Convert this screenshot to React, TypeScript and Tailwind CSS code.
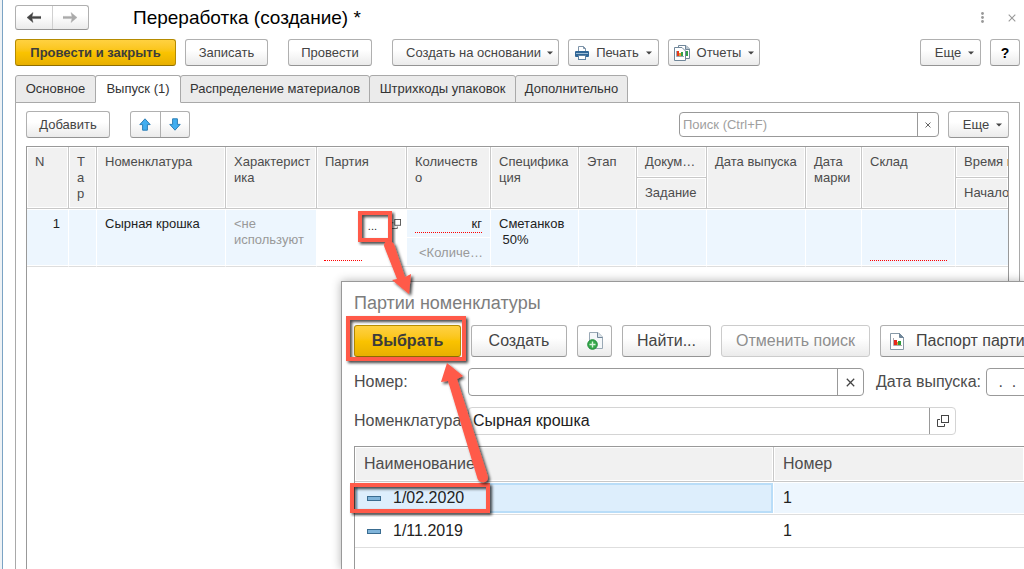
import React, { useState } from "react";
import clsx from "clsx";

type ButtonProps = React.ButtonHTMLAttributes<HTMLButtonElement>;

function Button({ className, children, ...rest }: ButtonProps) {
  return (
    <button
      type="button"
      className={clsx(
        "flex shrink-0 items-center justify-center rounded-[3px] border border-[#b0b0b0] border-b-[#949494] bg-linear-to-b from-white from-40% to-[#ebebeb] whitespace-nowrap text-[#444] disabled:border-[#cccccc] disabled:text-[#8e8e8e]",
        className,
      )}
      {...rest}
    >
      {children}
    </button>
  );
}

function PrimaryButton({ className, children, ...rest }: ButtonProps) {
  return (
    <button
      type="button"
      className={clsx(
        "flex shrink-0 items-center justify-center rounded-[3px] border border-[#b58b00] border-b-[#8f6e00] bg-linear-to-b from-[#ffd140] via-[#fac300] to-[#e8b000] font-bold whitespace-nowrap text-[#3c3c3c]",
        className,
      )}
      {...rest}
    >
      {children}
    </button>
  );
}

function Caret() {
  return (
    <svg width="6" height="4" viewBox="0 0 6 4" className="mt-px shrink-0" aria-hidden="true">
      <path d="M0 0.5h6L3 3.5z" fill="#444" />
    </svg>
  );
}

function NavArrow({ color, flip }: { color: string; flip?: boolean }) {
  return (
    <svg width="14" height="11" viewBox="0 0 14 11" className={flip ? "rotate-180" : ""} aria-hidden="true">
      <path d="M0 5.5L6 0.5L5 4.4H14V6.6H5L6 10.5z" fill={color} stroke={color} strokeWidth="0.4" />
    </svg>
  );
}

function MoveArrow({ flip }: { flip?: boolean }) {
  return (
    <svg width="12" height="13" viewBox="0 0 12 13" className={flip ? "rotate-180" : ""} aria-hidden="true">
      <path d="M6 0.8L11.2 6.6H8.4V12.2H3.6V6.6H0.8z" fill="#41aef0" stroke="#2d7fb5" />
    </svg>
  );
}

function PrinterIcon() {
  return (
    <svg width="14" height="14" viewBox="0 0 14 14" aria-hidden="true">
      <path d="M3.5 5V0.5H8.5L10.5 2.5V5" fill="#fff" stroke="#7d93a8" />
      <path d="M8.5 0.5V2.5H10.5" fill="none" stroke="#7d93a8" />
      <rect x="0" y="5" width="14" height="6" rx="1" fill="#2f6697" />
      <path d="M1 7.5H13" stroke="#9dbdd6" />
      <rect x="3.5" y="9.5" width="7" height="4" fill="#fff" stroke="#5e82a2" />
    </svg>
  );
}

function ReportsIcon() {
  return (
    <svg width="16" height="16" viewBox="0 0 16 16" aria-hidden="true">
      <path d="M4.5 0.5H12L15.5 4V13.5H4.5z" fill="#fff" stroke="#71879a" />
      <path d="M11.5 0.5V4.5H15.5" fill="#b9c6d0" stroke="#71879a" />
      <rect x="12" y="6" width="2" height="5" fill="#31a24c" />
      <path d="M0.5 2.5H8L11.5 6V15.5H0.5z" fill="#fff" stroke="#71879a" />
      <path d="M2.5 6V11.5H10" fill="none" stroke="#9aa9b5" />
      <rect x="3" y="6" width="2" height="5" fill="#e63a1e" />
      <rect x="5" y="8" width="2" height="3" fill="#e89a30" />
      <rect x="7" y="7" width="2" height="4" fill="#31a24c" />
    </svg>
  );
}

function ReportIcon() {
  return (
    <svg width="14" height="17" viewBox="0 0 14 17" aria-hidden="true">
      <path d="M0.5 0.5H9.5L13.5 4.5V16.5H0.5z" fill="#fff" stroke="#8798a6" />
      <path d="M9.5 0.5V4.5H13.5z" fill="#71879a" stroke="#71879a" />
      <path d="M3.5 5V12.5H12" fill="none" stroke="#b0a8b0" />
      <rect x="4" y="7" width="3" height="5" fill="#e6281e" />
      <rect x="8" y="8" width="3" height="4" fill="#2f9a3a" />
      <rect x="7" y="9" width="1" height="3" fill="#e89a30" />
    </svg>
  );
}

function NewFileIcon() {
  return (
    <svg width="16" height="18" viewBox="0 0 16 18" aria-hidden="true">
      <path d="M2.5 0.5H11L15.5 5V16.5H2.5z" fill="#f4f7f9" stroke="#9aa9b5" />
      <path d="M10.5 0.5V5.5H15.5" fill="#dce4ea" stroke="#71879a" />
      <circle cx="5.5" cy="12.5" r="4.8" fill="#35a94a" stroke="#1f8a38" />
      <path d="M5.5 9.5V15.5M2.5 12.5H8.5" stroke="#d8f2dc" strokeWidth="1.4" />
    </svg>
  );
}

function OpenIcon({ size }: { size: number }) {
  return (
    <svg width={size} height={size} viewBox="0 0 12 12" fill="none" stroke="#444" aria-hidden="true">
      <rect x="4.5" y="0.5" width="7" height="7" />
      <path d="M3 4.5H0.5V11.5H7.5V9" />
    </svg>
  );
}

function Cross({ size, color }: { size: number; color: string }) {
  return (
    <svg width={size} height={size} viewBox="0 0 8 8" aria-hidden="true">
      <path d="M0.7 0.7L7.3 7.3M7.3 0.7L0.7 7.3" stroke={color} strokeWidth="1.1" />
    </svg>
  );
}

const tabs = [
  { label: "Основное", width: "w-[81px]" },
  { label: "Выпуск (1)", width: "w-[86px]" },
  { label: "Распределение материалов", width: "w-[190px]" },
  { label: "Штрихкоды упаковок", width: "w-[147px]" },
  { label: "Дополнительно", width: "w-[113px]" },
];

const headCell =
  "overflow-hidden border-r border-b border-[#c8c8c8] bg-[#f1f1f1] px-2 pt-[7px] text-left align-top font-normal text-[#4c4c4c] shadow-[inset_0_0_0_1px_#fff] last:border-r-0";
const bodyCell =
  "overflow-hidden border-r border-b border-r-white border-b-[#dedede] bg-[#edf6fe] px-2 pt-[7px] align-top shadow-[inset_0_1px_0_#fff,inset_0_-1px_0_#fff] last:border-r-0";

function OutputTable() {
  return (
    <table className="w-full table-fixed border-separate border-spacing-0 leading-4">
      <colgroup>
        <col className="w-[42px]" />
        <col className="w-[28px]" />
        <col className="w-[129px]" />
        <col className="w-[91px]" />
        <col className="w-[90px]" />
        <col className="w-[84px]" />
        <col className="w-[88px]" />
        <col className="w-[58px]" />
        <col className="w-[70px]" />
        <col className="w-[99px]" />
        <col className="w-[56px]" />
        <col className="w-[94px]" />
        <col />
      </colgroup>
      <thead>
        <tr className="h-[31px]">
          <th rowSpan={2} className={headCell}>N</th>
          <th rowSpan={2} className={clsx(headCell, "break-all")}>Тар</th>
          <th rowSpan={2} className={headCell}>Номенклатура</th>
          <th rowSpan={2} className={clsx(headCell, "whitespace-nowrap")}>Характерист<br />ика</th>
          <th rowSpan={2} className={headCell}>Партия</th>
          <th rowSpan={2} className={headCell}>Количеств<br />о</th>
          <th rowSpan={2} className={headCell}>Специфика<br />ция</th>
          <th rowSpan={2} className={headCell}>Этап</th>
          <th className={headCell}>Докум…</th>
          <th rowSpan={2} className={clsx(headCell, "whitespace-nowrap")}>Дата выпуска</th>
          <th rowSpan={2} className={headCell}>Дата марки</th>
          <th rowSpan={2} className={headCell}>Склад</th>
          <th className={clsx(headCell, "whitespace-nowrap")}>Время п</th>
        </tr>
        <tr className="h-[31px]">
          <th className={headCell}>Задание</th>
          <th className={headCell}>Начало</th>
        </tr>
      </thead>
      <tbody className="text-[#222]">
        <tr className="h-[58px]">
          <td className={clsx(bodyCell, "text-right")}>1</td>
          <td className={bodyCell} />
          <td className={bodyCell}>Сырная крошка</td>
          <td className={clsx(bodyCell, "text-[#999]")}>&lt;не используют</td>
          <td className="border-b border-[#dedede] p-0 align-top">
            <div className="flex h-[57px] flex-col justify-between pb-[5px] pl-[7px]">
              <div className="flex items-start justify-end gap-[10px] pt-[9px] pr-[6px]">
                <button type="button" aria-label="Выбрать партию" className="px-1 text-[11px] leading-4">...</button>
                <button type="button" aria-label="Открыть партию" className="pt-px">
                  <OpenIcon size={10} />
                </button>
              </div>
              <div className="w-[38px] border-b border-dotted border-[#ff0000]" />
            </div>
          </td>
          <td className="border-r border-b border-r-white border-b-[#dedede] bg-[#edf6fe] p-0 align-top shadow-[inset_0_1px_0_#fff,inset_0_-1px_0_#fff]">
            <div className="border-b border-white px-2 pt-[7px] pb-1">
              <div className="border-b border-dotted border-[#ff0000] text-right leading-4">кг</div>
            </div>
            <div className="px-3 pt-[7px] text-[#999]">&lt;Количе…</div>
          </td>
          <td className={bodyCell}>Сметанков<br />&nbsp;50%</td>
          <td className={bodyCell} />
          <td className={bodyCell} />
          <td className={bodyCell} />
          <td className={bodyCell} />
          <td className={bodyCell}>
            <div className="h-[45px] border-b border-dotted border-[#ff0000]" />
          </td>
          <td className={bodyCell} />
        </tr>
      </tbody>
    </table>
  );
}

const batches = [
  { name: "1/02.2020", number: "1" },
  { name: "1/11.2019", number: "1" },
];

function BatchTable() {
  const head = "h-[35px] border-b border-[#c8c8c8] bg-[#f1f1f1] text-left font-normal text-[#4c4c4c] shadow-[inset_0_0_0_1px_#fff]";
  return (
    <table className="w-full table-fixed border-separate border-spacing-0">
      <colgroup>
        <col className="w-[419px]" />
        <col />
      </colgroup>
      <thead>
        <tr>
          <th className={clsx(head, "border-r px-[9px]")}>Наименование</th>
          <th className={clsx(head, "px-[9px]")}>Номер</th>
        </tr>
      </thead>
      <tbody className="text-[#222]">
        {batches.map((batch, i) => (
          <tr key={batch.name} className="h-[33px]">
            <td className="border-b border-[#dedede] p-px">
              <div
                className={clsx(
                  "flex h-[30px] items-center gap-3 border-2 px-[9px]",
                  i === 0 ? "border-[#b9ddf8] bg-[#ddeefc]" : "border-white bg-white",
                )}
              >
                <span className="h-[5px] w-[14px] border border-[#3a6c90] bg-[#7fb4da]" />
                {batch.name}
              </div>
            </td>
            <td
              className={clsx(
                "border-b border-[#dedede] px-[9px] py-0",
                i === 0 && "bg-[#edf6fe] shadow-[inset_0_1px_0_#fff,inset_0_-1px_0_#fff]",
              )}
            >
              {batch.number}
            </td>
          </tr>
        ))}
      </tbody>
    </table>
  );
}

function BatchDialog() {
  const [number, setNumber] = useState("");
  const [item, setItem] = useState("Сырная крошка");
  return (
    <section
      role="dialog"
      aria-labelledby="batch-title"
      className="absolute top-[281px] right-0 bottom-0 left-[341px] flex flex-col overflow-hidden border-t border-l border-[#999] bg-white pl-3 text-base text-[#4c4c4c] shadow-[0_0_9px_rgba(0,0,0,0.3)]"
    >
      <h2 id="batch-title" className="mt-[9px] text-lg leading-6 text-[#7d7d7d]">Партии номенклатуры</h2>
      <div className="mt-[10px] flex gap-[10px] pb-[11px]">
        <PrimaryButton className="h-8 w-[107px]">Выбрать</PrimaryButton>
        <Button className="h-8 w-24">Создать</Button>
        <Button className="h-8 w-[35px]" aria-label="Создать новый элемент">
          <NewFileIcon />
        </Button>
        <Button className="h-8 w-[89px]">Найти...</Button>
        <Button className="h-8 w-[149px]" disabled>Отменить поиск</Button>
        <Button className="h-8 gap-3 px-[9px]">
          <ReportIcon />
          Паспорт партии
        </Button>
      </div>
      <div className="flex items-center">
        <label htmlFor="number" className="w-[114px] shrink-0">Номер:</label>
        <div className="flex h-7 w-[396px] shrink-0 rounded-[4px] border border-[#999]">
          <input
            id="number"
            value={number}
            onChange={(e) => setNumber(e.target.value)}
            className="min-w-0 flex-1 px-1 outline-none"
          />
          <button
            type="button"
            aria-label="Очистить номер"
            onClick={() => setNumber("")}
            className="flex w-[26px] items-center justify-center border-l border-[#999]"
          >
            <Cross size={9} color="#444" />
          </button>
        </div>
        <label htmlFor="date" className="mr-[5px] ml-3 shrink-0">Дата выпуска:</label>
        <input
          id="date"
          defaultValue=" .  ."
          className="h-7 w-[120px] shrink-0 rounded-[4px] border border-[#999] px-[7px] whitespace-pre outline-none"
        />
      </div>
      <div className="mt-[11px] flex items-center">
        <label htmlFor="item" className="w-[114px] shrink-0">Номенклатура:</label>
        <div className="flex h-7 w-[488px] shrink-0 rounded-[4px] border border-[#d4d4d4]">
          <input
            id="item"
            value={item}
            onChange={(e) => setItem(e.target.value)}
            className="min-w-0 flex-1 px-1 text-[#222] outline-none"
          />
          <button
            type="button"
            aria-label="Открыть номенклатуру"
            className="flex w-[26px] items-center justify-center border-l border-[#999]"
          >
            <OpenIcon size={12} />
          </button>
        </div>
      </div>
      <div className="mt-[11px] flex-1 border-t border-l border-[#999]">
        <BatchTable />
      </div>
    </section>
  );
}

function Annotations() {
  return (
    <svg
      width="1024"
      height="569"
      viewBox="0 0 1024 569"
      className="pointer-events-none absolute top-0 left-0 max-w-none"
      aria-hidden="true"
    >
      <defs>
        <filter id="drop" x="-20%" y="-20%" width="140%" height="140%">
          <feDropShadow dx="2" dy="2" stdDeviation="1.5" floodColor="#000" floodOpacity="0.75" />
        </filter>
      </defs>
      <g fill="none" stroke="#ff5a4a" strokeWidth="4">
        <rect x="360" y="213" width="30" height="27" filter="url(#drop)" />
        <rect x="348" y="318" width="116" height="41" filter="url(#drop)" />
        <rect x="352" y="485" width="136" height="26" filter="url(#drop)" />
      </g>
      <g fill="#ff5a4a">
        <path d="M384 246Q384 241 388 241Q392 241 394 244L405 277L411 274L409 294L392 280L397 279z" filter="url(#drop)" />
        <path d="M447 363L463 376L457 379L488 477Q488 483 482 482Q478 482 477 477L448 381L441 382z" filter="url(#drop)" />
      </g>
    </svg>
  );
}

export default function App() {
  const [active, setActive] = useState(1);
  const [search, setSearch] = useState("");

  return (
    <div className="relative flex h-screen overflow-hidden bg-white font-['Liberation_Sans',Arial,sans-serif] text-[13px] text-[#333]">
      <div className="w-[3px] shrink-0 border-r border-[#7ba3c4] bg-[#eef2f5]" />
      <main className="flex min-w-0 flex-1 flex-col pt-[5px] pr-1 pl-3">
        <header className="flex items-center">
          <div className="flex h-[25px] w-[74px] shrink-0 rounded-[3px] border border-[#b0b0b0] border-b-[#949494] bg-linear-to-b from-white from-40% to-[#ebebeb]">
            <button type="button" aria-label="Назад" className="flex flex-1 items-center justify-center border-r border-[#d0d0d0]">
              <NavArrow color="#444" />
            </button>
            <button type="button" aria-label="Вперед" className="flex flex-1 items-center justify-center">
              <NavArrow color="#aaa" flip />
            </button>
          </div>
          <h1 className="ml-11 flex-1 text-[19px] leading-6 text-black">Переработка (создание) *</h1>
          <button type="button" aria-label="Меню окна" className="p-1">
            <svg width="3" height="11" viewBox="0 0 3 11" fill="#999" aria-hidden="true">
              <circle cx="1.5" cy="1.5" r="1.4" />
              <circle cx="1.5" cy="5.5" r="1.4" />
              <circle cx="1.5" cy="9.5" r="1.4" />
            </svg>
          </button>
          <button type="button" aria-label="Закрыть" className="ml-4 p-1">
            <Cross size={8} color="#999" />
          </button>
        </header>

        <div className="mt-[9px] flex">
          <PrimaryButton className="h-[27px] w-[161px]">Провести и закрыть</PrimaryButton>
          <Button className="ml-[9px] h-[27px] w-[83px]">Записать</Button>
          <Button className="ml-5 h-[27px] w-[84px]">Провести</Button>
          <Button className="ml-5 h-[27px] w-[167px] gap-[6px] pl-2">Создать на основании<Caret /></Button>
          <Button className="ml-[9px] h-[27px] w-[91px] gap-[7px]"><PrinterIcon />Печать<Caret /></Button>
          <Button className="ml-[9px] h-[27px] w-[92px] gap-[7px]"><ReportsIcon />Отчеты<Caret /></Button>
          <Button className="ml-auto h-[27px] w-[61px] gap-[7px] pl-2">Еще<Caret /></Button>
          <Button className="ml-[9px] h-[27px] w-[30px] text-sm font-bold text-black">?</Button>
        </div>

        <div role="tablist" className="mt-[9px] flex">
          {tabs.map((tab, i) => (
            <button
              key={tab.label}
              type="button"
              role="tab"
              aria-selected={i === active}
              onClick={() => setActive(i)}
              className={clsx(
                "relative flex h-7 items-center justify-center rounded-t-[3px] border border-[#a9a9a9] whitespace-nowrap",
                tab.width,
                i > 0 && "-ml-px",
                i === active ? "z-10 border-b-white bg-white" : "bg-[#ebebeb]",
              )}
            >
              {tab.label}
            </button>
          ))}
        </div>

        <div className="-mt-px flex flex-1 flex-col border-x border-t border-[#a9a9a9] px-[10px] pt-2">
          <div className="flex items-center">
            <Button className="h-[27px] w-[84px]">Добавить</Button>
            <div className="ml-5 flex h-[27px] w-[60px] rounded-[3px] border border-[#b0b0b0] border-b-[#949494] bg-linear-to-b from-white from-40% to-[#ebebeb]">
              <button type="button" aria-label="Переместить вверх" className="flex flex-1 items-center justify-center border-r border-[#b0b0b0]">
                <MoveArrow />
              </button>
              <button type="button" aria-label="Переместить вниз" className="flex flex-1 items-center justify-center">
                <MoveArrow flip />
              </button>
            </div>
            <div className="ml-auto flex h-[25px] w-[260px] rounded-[4px] border border-[#999]">
              <input
                aria-label="Поиск"
                placeholder="Поиск (Ctrl+F)"
                value={search}
                onChange={(e) => setSearch(e.target.value)}
                className="min-w-0 flex-1 px-[3px] outline-none placeholder:text-[#a0a0a0]"
              />
              <button
                type="button"
                aria-label="Очистить поиск"
                onClick={() => setSearch("")}
                className="flex w-[21px] items-center justify-center border-l border-[#999]"
              >
                <Cross size={6} color="#444" />
              </button>
            </div>
            <Button className="ml-[9px] h-[27px] w-[61px] gap-[7px] pl-2">Еще<Caret /></Button>
          </div>
          <div className="mt-2 flex-1 overflow-hidden border-x border-t border-[#999]">
            <OutputTable />
          </div>
        </div>
      </main>
      <BatchDialog />
      <Annotations />
    </div>
  );
}
